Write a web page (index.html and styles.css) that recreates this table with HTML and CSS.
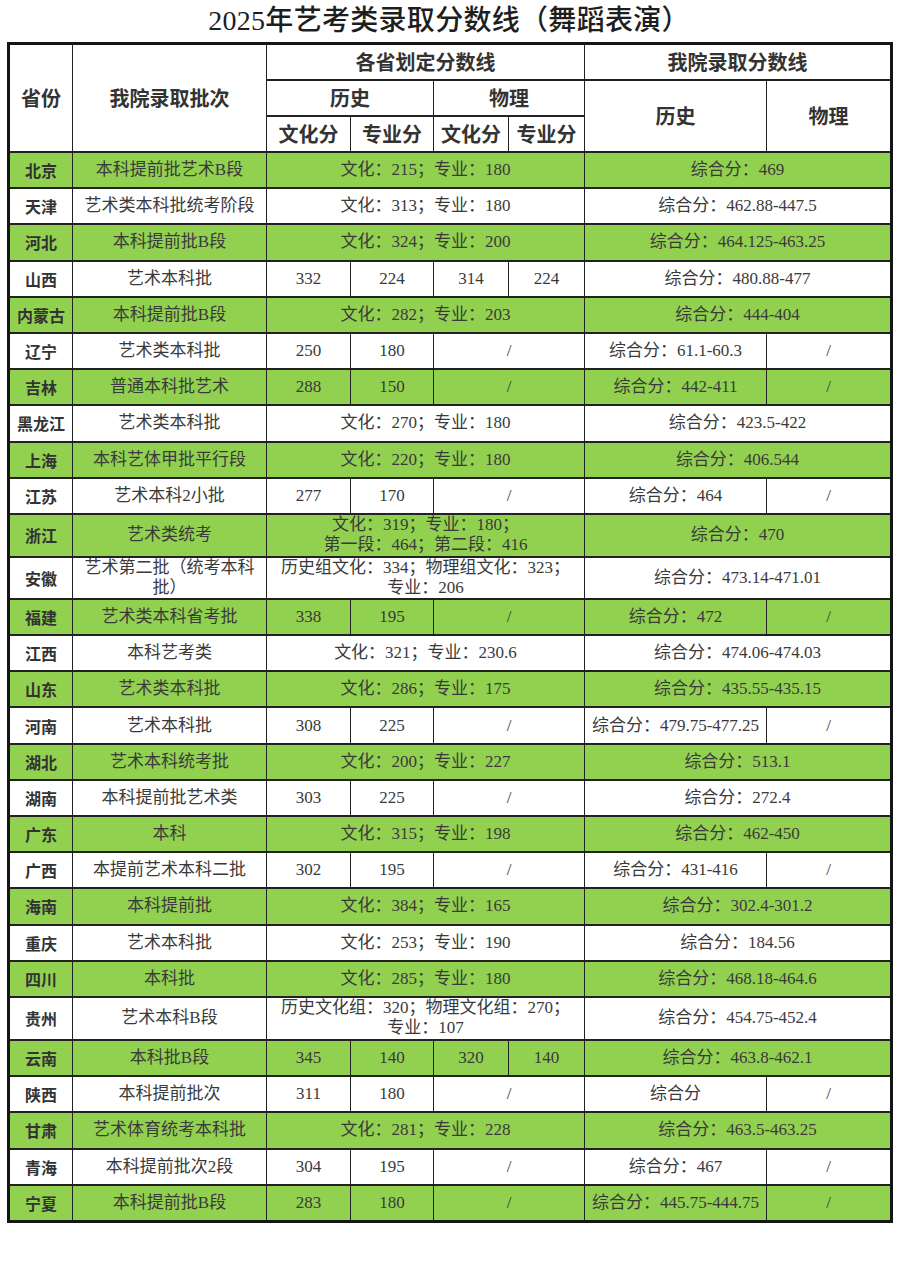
FILE: index.html
```html
<!DOCTYPE html>
<html lang="zh-CN">
<head>
<meta charset="utf-8">
<title>2025年艺考类录取分数线（舞蹈表演）</title>
<link rel="stylesheet" href="styles.css">
</head>
<body>
<div class="title">2025年艺考类录取分数线（舞蹈表演）</div>
<table class="scores">
  <colgroup>
    <col class="c-prov"><col class="c-batch"><col class="c-a"><col class="c-b"><col class="c-c"><col class="c-d"><col class="c-e"><col class="c-f">
  </colgroup>
  <thead>
    <tr class="h1">
      <th rowspan="3">省份</th>
      <th rowspan="3">我院录取批次</th>
      <th colspan="4">各省划定分数线</th>
      <th colspan="2">我院录取分数线</th>
    </tr>
    <tr class="h2">
      <th colspan="2">历史</th>
      <th colspan="2">物理</th>
      <th rowspan="2">历史</th>
      <th rowspan="2">物理</th>
    </tr>
    <tr class="h3">
      <th>文化分</th>
      <th>专业分</th>
      <th>文化分</th>
      <th>专业分</th>
    </tr>
  </thead>
  <tbody>
    <tr class="g"><td class="p">北京</td><td>本科提前批艺术B段</td><td colspan="4">文化：215；专业：180</td><td colspan="2">综合分：469</td></tr>
    <tr><td class="p">天津</td><td>艺术类本科批统考阶段</td><td colspan="4">文化：313；专业：180</td><td colspan="2">综合分：462.88-447.5</td></tr>
    <tr class="g"><td class="p">河北</td><td>本科提前批B段</td><td colspan="4">文化：324；专业：200</td><td colspan="2">综合分：464.125-463.25</td></tr>
    <tr><td class="p">山西</td><td>艺术本科批</td><td>332</td><td>224</td><td>314</td><td>224</td><td colspan="2">综合分：480.88-477</td></tr>
    <tr class="g"><td class="p">内蒙古</td><td>本科提前批B段</td><td colspan="4">文化：282；专业：203</td><td colspan="2">综合分：444-404</td></tr>
    <tr><td class="p">辽宁</td><td>艺术类本科批</td><td>250</td><td>180</td><td colspan="2">/</td><td>综合分：61.1-60.3</td><td>/</td></tr>
    <tr class="g"><td class="p">吉林</td><td>普通本科批艺术</td><td>288</td><td>150</td><td colspan="2">/</td><td>综合分：442-411</td><td>/</td></tr>
    <tr><td class="p">黑龙江</td><td>艺术类本科批</td><td colspan="4">文化：270；专业：180</td><td colspan="2">综合分：423.5-422</td></tr>
    <tr class="g"><td class="p">上海</td><td>本科艺体甲批平行段</td><td colspan="4">文化：220；专业：180</td><td colspan="2">综合分：406.544</td></tr>
    <tr><td class="p">江苏</td><td>艺术本科2小批</td><td>277</td><td>170</td><td colspan="2">/</td><td>综合分：464</td><td>/</td></tr>
    <tr class="g tall"><td class="p">浙江</td><td>艺术类统考</td><td colspan="4">文化：319；专业：180；<br>第一段：464；第二段：416</td><td colspan="2">综合分：470</td></tr>
    <tr class="tall2"><td class="p">安徽</td><td>艺术第二批（统考本科批）</td><td colspan="4">历史组文化：334；物理组文化：323；<br>专业：206</td><td colspan="2">综合分：473.14-471.01</td></tr>
    <tr class="g"><td class="p">福建</td><td>艺术类本科省考批</td><td>338</td><td>195</td><td colspan="2">/</td><td>综合分：472</td><td>/</td></tr>
    <tr><td class="p">江西</td><td>本科艺考类</td><td colspan="4">文化：321；专业：230.6</td><td colspan="2">综合分：474.06-474.03</td></tr>
    <tr class="g"><td class="p">山东</td><td>艺术类本科批</td><td colspan="4">文化：286；专业：175</td><td colspan="2">综合分：435.55-435.15</td></tr>
    <tr><td class="p">河南</td><td>艺术本科批</td><td>308</td><td>225</td><td colspan="2">/</td><td class="tight">综合分：479.75-477.25</td><td>/</td></tr>
    <tr class="g"><td class="p">湖北</td><td>艺术本科统考批</td><td colspan="4">文化：200；专业：227</td><td colspan="2">综合分：513.1</td></tr>
    <tr><td class="p">湖南</td><td>本科提前批艺术类</td><td>303</td><td>225</td><td colspan="2">/</td><td colspan="2">综合分：272.4</td></tr>
    <tr class="g"><td class="p">广东</td><td>本科</td><td colspan="4">文化：315；专业：198</td><td colspan="2">综合分：462-450</td></tr>
    <tr><td class="p">广西</td><td>本提前艺术本科二批</td><td>302</td><td>195</td><td colspan="2">/</td><td>综合分：431-416</td><td>/</td></tr>
    <tr class="g"><td class="p">海南</td><td>本科提前批</td><td colspan="4">文化：384；专业：165</td><td colspan="2">综合分：302.4-301.2</td></tr>
    <tr><td class="p">重庆</td><td>艺术本科批</td><td colspan="4">文化：253；专业：190</td><td colspan="2">综合分：184.56</td></tr>
    <tr class="g"><td class="p">四川</td><td>本科批</td><td colspan="4">文化：285；专业：180</td><td colspan="2">综合分：468.18-464.6</td></tr>
    <tr class="tall"><td class="p">贵州</td><td>艺术本科B段</td><td colspan="4">历史文化组：320；物理文化组：270；<br>专业：107</td><td colspan="2">综合分：454.75-452.4</td></tr>
    <tr class="g"><td class="p">云南</td><td>本科批B段</td><td>345</td><td>140</td><td>320</td><td>140</td><td colspan="2">综合分：463.8-462.1</td></tr>
    <tr><td class="p">陕西</td><td>本科提前批次</td><td>311</td><td>180</td><td colspan="2">/</td><td>综合分</td><td>/</td></tr>
    <tr class="g"><td class="p">甘肃</td><td>艺术体育统考本科批</td><td colspan="4">文化：281；专业：228</td><td colspan="2">综合分：463.5-463.25</td></tr>
    <tr><td class="p">青海</td><td>本科提前批次2段</td><td>304</td><td>195</td><td colspan="2">/</td><td>综合分：467</td><td>/</td></tr>
    <tr class="g"><td class="p">宁夏</td><td>本科提前批B段</td><td>283</td><td>180</td><td colspan="2">/</td><td class="tight">综合分：445.75-444.75</td><td>/</td></tr>
  </tbody>
</table>
</body>
</html>
```
FILE: styles.css
```css
html, body {
  margin: 0;
  padding: 0;
  background: #ffffff;
}

body {
  width: 898px;
  font-family: "Liberation Serif", "Noto Sans CJK SC", serif;
  color: #3a3a3a;
}

.title {
  height: 42px;
  line-height: 42px;
  text-align: center;
  font-family: "Liberation Serif", "Noto Sans CJK SC", sans-serif;
  font-size: 28px;
  font-weight: 500;
  letter-spacing: 0.3px;
  color: #1e1e1e;
}

.scores {
  margin-left: 7px;
  border-collapse: collapse;
  table-layout: fixed;
  width: 883px;
  border: 3px solid #151515;
}

.c-prov { width: 64px; }
.c-batch { width: 194px; }
.c-a { width: 84px; }
.c-b { width: 83px; }
.c-c { width: 75px; }
.c-d { width: 76px; }
.c-e { width: 182px; }
.c-f { width: 125px; }

.scores th,
.scores td {
  border-left: 1px solid #222222;
  border-right: 1px solid #222222;
  border-top: 2px solid #222222;
  border-bottom: 2px solid #222222;
  padding: 0 1px;
  text-align: center;
  vertical-align: middle;
}

.scores th {
  font-family: "Noto Sans CJK SC", sans-serif;
  font-size: 20px;
  font-weight: 700;
  color: #333333;
  line-height: 24px;
}

.h1 th { height: 34px; }
.h2 th { height: 34px; }
.h3 th { height: 34px; }

.scores td {
  font-size: 17px;
  line-height: 20px;
  height: 34.2px;
  padding-top: 0;
  padding-bottom: 0;
}

.scores td.p {
  font-family: "Noto Sans CJK SC", sans-serif;
  font-size: 16px;
  font-weight: 700;
  color: #333333;
}

.scores td.tight {
  padding: 0;
  white-space: nowrap;
}

.scores tr.tall td { height: 41px; }
.scores tr.tall2 td { height: 40px; }

.scores tr.g td {
  background: #92d050;
}
```
